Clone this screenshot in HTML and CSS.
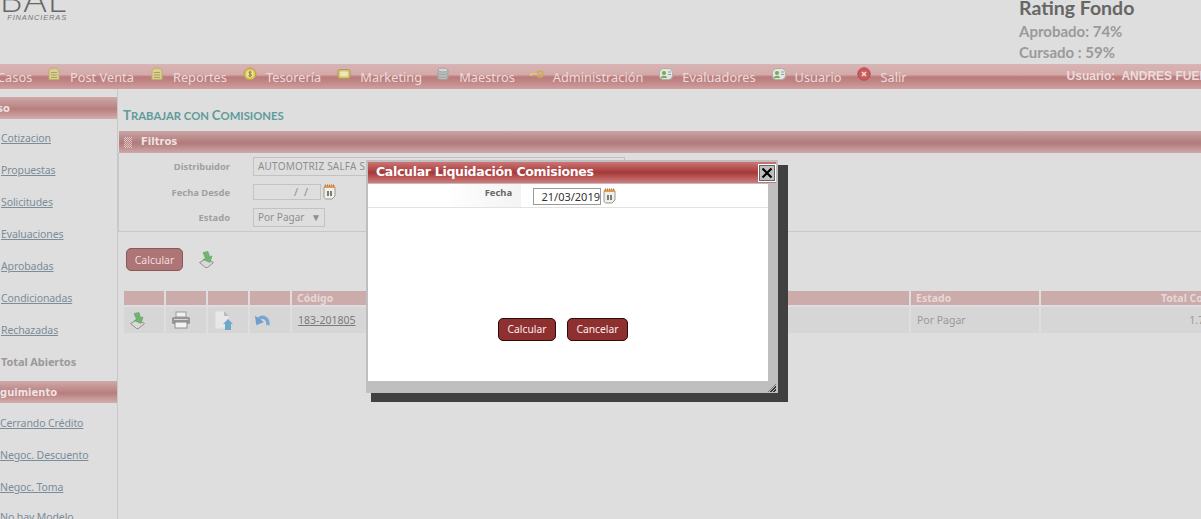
FILE: index.html
```html
<!DOCTYPE html>
<html>
<head>
    <meta charset="utf-8">
    <title>Trabajar con Comisiones</title>
    <link rel="stylesheet" href="styles.css">
</head>
<body>
    <svg width="0" height="0" class="defs">
        <symbol id="i-note" viewBox="0 0 14 14">
            <path d="M2 12.500V4c0-4 10-4 10 0v8.500z" fill="#dccf94" stroke="#bcae68"/>
            <path d="M4 5.500h6M4 8h6M4 10.500h6" stroke="#ac9e5c"/>
        </symbol>
        <symbol id="i-coin" viewBox="0 0 14 14">
            <circle cx="7" cy="7" r="6" fill="#d9c45c" stroke="#b8a23f"/>
            <circle cx="7" cy="7" r="3.800" fill="#eee2a4"/>
            <path d="M8.600 5.400C7.600 4.500 5.600 4.900 6 6.200c.4 1 2.600.6 2.600 2 0 1.200-2.100 1.300-3.100.4M7 3.800v6.400" fill="none" stroke="#8d7a22"/>
        </symbol>
        <symbol id="i-card" viewBox="0 0 16 12">
            <rect x="1" y="1" width="14" height="10" rx="2.500" fill="#d8c97a" stroke="#a4954c"/>
            <rect x="3.500" y="3" width="9" height="5.500" rx="1" fill="#eee6b6"/>
        </symbol>
        <symbol id="i-db" viewBox="0 0 12 14">
            <path d="M1 3v8c0 2 10 2 10 0V3z" fill="#bdbdbd" stroke="#a3a3a3"/>
            <ellipse cx="6" cy="3" rx="5" ry="2" fill="#d4d4d4" stroke="#a3a3a3"/>
            <path d="M1 6c0 2 10 2 10 0M1 8.800c0 2 10 2 10 0" fill="none" stroke="#a3a3a3"/>
        </symbol>
        <symbol id="i-key" viewBox="0 0 14 9">
            <circle cx="10" cy="4.500" r="3" fill="none" stroke="#cdb04e" stroke-width="1.600"/>
            <path d="M7 4.500H1v2" fill="none" stroke="#d9c67c" stroke-width="2"/>
        </symbol>
        <symbol id="i-user" viewBox="0 0 14 12">
            <rect x=".5" y=".5" width="13" height="11" rx="4" fill="#e2e6de" stroke="#a8b0a4"/>
            <circle cx="5" cy="5" r="2" fill="#78aa58"/>
            <path d="M2 10c0-3 6-3 6 0z" fill="#78aa58"/>
            <path d="M9 4h3M9 6.500h3" stroke="#8aa0b4"/>
        </symbol>
        <symbol id="i-exit" viewBox="0 0 14 14">
            <circle cx="7" cy="7" r="6.200" fill="#c95b5b" stroke="#b64a4a"/>
            <path d="M5 5l4 4M9 5l-4 4" stroke="#f0dcdc" stroke-width="1.600"/>
        </symbol>
        <symbol id="i-cal" viewBox="0 0 13 16">
            <path d="M1 3h11v9l-3 3H3c-1 0-2-1-2-2z" fill="#eeeeea" stroke="#9a9a90"/>
            <rect x="1" y="1.500" width="11" height="2.500" fill="#e59a52"/>
            <path d="M2.500 .5v2M4.500 .5v2M6.500 .5v2M8.500 .5v2M10.500 .5v2" stroke="#a87c50"/>
            <path d="M5 7v5M8 7v5" stroke="#333" stroke-width="1.200"/>
        </symbol>
        <symbol id="i-down" viewBox="0 0 15 17">
            <path d="M.5 11.500l7-4 7 4-6 5h-2z" fill="#d9d9d9" stroke="#8f8f8f"/>
            <path d="M4 1.500l5-1 1.500 5 2.500-.5-2 6.500-7-3 2.500-1z" fill="#6fb56f" stroke="#5a9a5a" stroke-width=".5"/>
        </symbol>
        <symbol id="i-print" viewBox="0 0 20 18">
            <rect x="5" y="1" width="10" height="5" fill="#f1f1f1" stroke="#999"/>
            <rect x="1" y="6" width="18" height="7" rx="1.500" fill="#969696"/>
            <rect x="4" y="11" width="12" height="6" fill="#f3f3f3" stroke="#8c8c8c"/>
            <path d="M3 8.500h14" stroke="#d6d6d6"/>
        </symbol>
        <symbol id="i-dochome" viewBox="0 0 20 20">
            <path d="M2 1h9l5 5v13H2z" fill="#e8e8e8" stroke="#d8d8d8"/>
            <path d="M11 1l5 5h-5z" fill="#bcbcbc"/>
            <path d="M15 9l5 5h-2v6h-6v-6h-2z" fill="#6ea8cc"/>
        </symbol>
        <symbol id="i-undo" viewBox="0 0 18 14">
            <path d="M14.500 12.500C16 6 9.500 1.500 5 6" fill="none" stroke="#7aa8d2" stroke-width="3.600"/>
            <path d="M1 2.500l1.500 10 8-3.500z" fill="#6f9ecb"/>
        </symbol>
    </svg>

    <header class="top">
        <div class="logo">
            <div class="logo-name">GLOBAL</div>
            <div class="logo-sub">FINANCIERAS</div>
        </div>
        <div class="rating">
            <h2>Rating Fondo</h2>
            <p>Aprobado: 74%</p>
            <p>Cursado : 59%</p>
        </div>
    </header>

    <nav class="menu">
        <span class="menu-first">Casos</span>
        <a class="menu-item"><svg class="ic"><use href="#i-note"/></svg>Post Venta</a>
        <a class="menu-item"><svg class="ic"><use href="#i-note"/></svg>Reportes</a>
        <a class="menu-item"><svg class="ic"><use href="#i-coin"/></svg>Tesorería</a>
        <a class="menu-item tight2"><svg class="ic"><use href="#i-card"/></svg>Marketing</a>
        <a class="menu-item tight1"><svg class="ic"><use href="#i-db"/></svg>Maestros</a>
        <a class="menu-item"><svg class="ic"><use href="#i-key"/></svg>Administración</a>
        <a class="menu-item"><svg class="ic"><use href="#i-user"/></svg>Evaluadores</a>
        <a class="menu-item"><svg class="ic"><use href="#i-user"/></svg>Usuario</a>
        <a class="menu-item"><svg class="ic"><use href="#i-exit"/></svg>Salir</a>
        <span class="menu-user">Usuario:&nbsp; ANDRES FUENTES</span>
    </nav>

    <div class="layout">
        <aside class="side">
            <div class="side-head"><span class="side-cut1">Caso</span></div>
            <ul class="side-list">
                <li><a>Cotizacion</a></li>
                <li><a>Propuestas</a></li>
                <li><a>Solicitudes</a></li>
                <li><a>Evaluaciones</a></li>
                <li><a>Aprobadas</a></li>
                <li><a>Condicionadas</a></li>
                <li><a>Rechazadas</a></li>
                <li class="total">Total Abiertos</li>
            </ul>
            <div class="side-head"><span class="side-cut2">Seguimiento</span></div>
            <ul class="side-list list-shift">
                <li><a>Cerrando Crédito</a></li>
                <li><a>Negoc. Descuento</a></li>
                <li><a>Negoc. Toma</a></li>
                <li class="last"><a>No hay Modelo</a></li>
            </ul>
        </aside>

        <main class="content">
            <h1 class="title"><span class="cap">T</span>RABAJAR CON <span class="cap">C</span>OMISIONES</h1>
            <div class="bar"><span class="dots"></span>Filtros</div>
            <section class="filters">
                <div class="f-row f-row1">
                    <label>Distribuidor</label>
                    <div class="field field-wide">AUTOMOTRIZ SALFA S.A.</div>
                </div>
                <div class="f-row f-row2">
                    <label>Fecha Desde</label>
                    <div class="field field-date">/ /</div>
                    <svg class="cal"><use href="#i-cal"/></svg>
                </div>
                <div class="f-row f-row3">
                    <label>Estado</label>
                    <div class="field field-sel">Por Pagar <span class="arrow">▼</span></div>
                </div>
            </section>

            <div class="actions">
                <button class="btn-dim">Calcular</button>
                <svg class="act-ic"><use href="#i-down"/></svg>
            </div>

            <div class="grid">
                <div class="th"></div><div class="th"></div><div class="th"></div><div class="th"></div>
                <div class="th">Código</div>
                <div class="th">Estado</div>
                <div class="th th-r">Total Comisión</div>
                <div class="td"><svg class="g-ic"><use href="#i-down"/></svg></div>
                <div class="td"><svg class="g-ic g-print"><use href="#i-print"/></svg></div>
                <div class="td"><svg class="g-ic g-doc"><use href="#i-dochome"/></svg></div>
                <div class="td"><svg class="g-ic g-undo"><use href="#i-undo"/></svg></div>
                <div class="td"><a class="code">183-201805</a></div>
                <div class="td">Por Pagar</div>
                <div class="td td-r">1.748.000</div>
            </div>
        </main>
    </div>

    <div class="modal-shadow"></div>
    <div class="modal">
        <div class="modal-title">
            <span>Calcular Liquidación Comisiones</span>
            <button class="modal-close">
                <svg width="12" height="12" viewBox="0 0 12 12"><path d="M1.500 1.500l9 9M10.500 1.500l-9 9" stroke="#000" stroke-width="2.200"/></svg>
            </button>
        </div>
        <div class="modal-body">
            <div class="m-row">
                <div class="m-label">Fecha</div>
                <div class="m-value">
                    <div class="m-input">21/03/2019</div>
                    <svg class="cal"><use href="#i-cal"/></svg>
                </div>
            </div>
            <div class="m-buttons">
                <button class="btn">Calcular</button>
                <button class="btn">Cancelar</button>
            </div>
        </div>
        <div class="modal-foot"><span class="grip"></span></div>
    </div>
</body>
</html>
```

FILE: styles.css
```css
html, body {
    margin: 0;
    height: 519px;
    overflow: hidden;
}
body {
    width: 1201px;
    background-color: #dedede;
    font-family: "Noto Sans", sans-serif;
    position: relative;
}
.defs {
    position: absolute;
}

/* header */
.top {
    height: 64px;
    display: flex;
    justify-content: space-between;
    overflow: hidden;
}
.logo {
    width: 67px;
    height: 64px;
    overflow: hidden;
}
.logo-name {
    font: 300 36px Lato, sans-serif;
    color: #666;
    letter-spacing: 1px;
    margin-top: -24px;
    height: 37px;
    width: 67px;
    display: flex;
    justify-content: flex-end;
    white-space: nowrap;
}
.logo-sub {
    font: italic 7.500px "Liberation Sans", sans-serif;
    letter-spacing: .85px;
    color: #777;
    text-align: right;
    white-space: nowrap;
}
.rating {
    width: 182px;
    color: #9a9a9a;
    font: bold 15px Lato, sans-serif;
}
.rating h2 {
    font: bold 19.500px Lato, sans-serif;
    color: #666;
    margin: -4px 0 3px 0;
}
.rating p {
    margin: 0 0 3px 0;
}

/* menu */
.menu {
    height: 25px;
    display: flex;
    align-items: center;
    white-space: nowrap;
    color: #ebdcdc;
    font-size: 12.800px;
    background: linear-gradient(#d9b4b4 0, #d3aaaa 42%, #bb7a7a 52%, #c08585 70%, #d09f9f 100%);
}
.menu > * {
    flex-shrink: 0;
}
.menu-first {
    margin-left: -3px;
    width: 50px;
}
.menu-item {
    display: flex;
    align-items: center;
    margin-right: 16px;
}
.tight1 {
    margin-right: 15px;
}
.tight2 {
    margin-right: 14px;
}
.ic {
    width: 14px;
    height: 14px;
    margin: -6px 9px 0 0;
}
.menu-user {
    font: bold 12px "Liberation Sans", sans-serif;
    margin-left: 144px;
    margin-top: -2px;
}

/* layout */
.layout {
    display: flex;
    height: 430px;
}
.side {
    width: 117px;
    flex-shrink: 0;
    border-right: 1px solid #c8c8c8;
    padding-top: 8px;
    overflow: hidden;
}
.side-head {
    height: 22px;
    font: bold 10px/23px "DejaVu Sans", sans-serif;
    color: #efe3e3;
    white-space: nowrap;
    background: linear-gradient(#cfa9a9, #b87e7e 55%, #d3adad);
}
.side-cut1 {
    margin-left: -17px;
}
.side-cut2 {
    margin-left: -14px;
}
.side-list {
    list-style: none;
    margin: 0 0 3px 0;
    padding: 3px 0 0 0;
    font-size: 10.500px;
    letter-spacing: -0.1px;
    color: #7c8c98;
}
.side-list li {
    height: 32px;
    line-height: 32px;
    padding-left: 1px;
    white-space: nowrap;
}
.side-list a {
    text-decoration: underline;
}
.side-list .total {
    font-weight: bold;
    color: #9a9a9a;
    font-size: 11px;
}
.list-shift {
    padding-top: 4px;
}
.list-shift li {
    padding-left: 0;
}
.list-shift .last {
    margin-top: -2px;
}

/* main */
.content {
    flex: 1;
    min-width: 0;
    padding-left: 1px;
}
.title {
    margin: 0 0 0 -1px;
    height: 42px;
    padding-left: 5px;
    font: bold 11.300px/52px Lato, sans-serif;
    color: #5f9b9b;
}
.cap {
    font-size: 13.300px;
}
.bar {
    height: 22px;
    padding-bottom: 2px;
    box-sizing: border-box;
    display: flex;
    align-items: center;
    font: bold 10px "DejaVu Sans", sans-serif;
    color: #efe3e3;
    background: linear-gradient(#c9a3a3, #b07a7a 55%, #cfa8a8);
}
.dots {
    width: 8px;
    height: 11px;
    margin: 2px 9px 0 5px;
    background: repeating-conic-gradient(#dcc4c4 0 25%, transparent 0 50%) 0 0/2px 2px;
}
.filters {
    height: 78px;
    border-left: 1px solid #c8c8c8;
    border-bottom: 1px solid #c8c8c8;
    margin-left: -1px;
    position: relative;
}
.f-row {
    display: flex;
    align-items: center;
    position: absolute;
    left: 0;
}
.f-row1 { top: 4px; }
.f-row2 { top: 31px; }
.f-row3 { top: 55px; }
.f-row label {
    width: 111px;
    margin-right: 23px;
    text-align: right;
    font: bold 9.400px "Noto Sans", sans-serif;
    color: #a0a0a0;
}
.field {
    box-sizing: border-box;
    border: 1px solid #c2c2c2;
    font-size: 10px;
    color: #8e8e8e;
    padding-left: 4px;
    white-space: nowrap;
    overflow: hidden;
}
.field-wide {
    width: 372px;
    height: 19px;
    line-height: 17px;
    letter-spacing: .2px;
}
.field-date {
    width: 68px;
    height: 16px;
    line-height: 14px;
    text-align: right;
    padding-right: 12px;
    word-spacing: 3px;
    font-size: 11px;
}
.field-sel {
    width: 72px;
    height: 19px;
    line-height: 17px;
}
.arrow {
    font-size: 10px;
    margin-left: 4px;
}
.cal {
    width: 13px;
    height: 16px;
    margin-left: 2px;
}
.actions {
    display: flex;
    align-items: center;
    height: 23px;
    padding: 16px 0 0 7px;
}
.btn-dim {
    width: 57px;
    height: 23px;
    padding: 0;
    border: 1px solid #8a5a5a;
    border-radius: 5px;
    background-color: #ad7575;
    color: #efdcdc;
    font: 10.500px "Noto Sans", sans-serif;
}
.act-ic {
    width: 15px;
    height: 17px;
    margin-left: 16px;
    margin-top: -1px;
}

/* table */
.grid {
    display: grid;
    grid-template-columns: 40px 40px 40px 40px 617px 128px 204px;
    gap: 2px;
    margin: 20px 0 0 5px;
    font-size: 10.500px;
    color: #9a9a9a;
}
.th {
    height: 14px;
    line-height: 14px;
    padding-left: 5px;
    box-sizing: border-box;
    background-color: #ccabab;
    color: #e6d8d8;
    font-weight: bold;
}
.td {
    height: 26px;
    line-height: 26px;
    padding-left: 6px;
    box-sizing: border-box;
    background-color: #d6d6d6;
    display: flex;
    align-items: center;
}
.th-r {
    text-align: right;
    padding-right: 7px;
}
.td-r {
    justify-content: flex-end;
    padding-right: 8px;
}
.code {
    color: #7a7a7a;
    text-decoration: underline;
}
.g-ic {
    width: 15px;
    height: 17px;
}
.g-print {
    width: 20px;
    height: 18px;
    margin-left: -1px;
}
.g-doc {
    width: 20px;
    height: 20px;
    margin-left: -1px;
}
.g-undo {
    width: 17px;
    height: 14px;
    margin-left: -2px;
}

/* dialog */
.modal-shadow {
    position: absolute;
    left: 371px;
    top: 165px;
    width: 417px;
    height: 237px;
    background-color: #404040;
}
.modal {
    position: absolute;
    left: 366px;
    top: 160px;
    width: 412px;
    height: 233px;
    box-sizing: border-box;
    padding: 2px 10px 0 2px;
    background-color: #bfbfbf;
    display: flex;
    flex-direction: column;
}
.modal-title {
    height: 21px;
    margin-right: -8px;
    display: flex;
    justify-content: space-between;
    align-items: center;
    padding: 0 0 2px 8px;
    box-sizing: border-box;
    font: bold 12.500px "DejaVu Sans", sans-serif;
    letter-spacing: -0.3px;
    color: #fff;
    background: linear-gradient(#cd7474, #a53a3a 50%, #cf7b7b);
}
.modal-close {
    width: 18px;
    height: 18px;
    padding: 0;
    margin-top: 2px;
    border: 1px solid #fff;
    outline: 1px solid #666;
    outline-offset: -2px;
    background-color: #bfbfbf;
    display: flex;
    align-items: center;
    justify-content: center;
}
.modal-body {
    margin-top: 1px;
    height: 197px;
    background-color: #fff;
}
.m-row {
    height: 23px;
    display: flex;
    border-bottom: 1px solid #e2e2e2;
}
.m-label {
    width: 144px;
    height: 23px;
    padding-right: 9px;
    text-align: right;
    font: bold 9.400px/17px "Noto Sans", sans-serif;
    color: #666;
    background: linear-gradient(90deg, #fff 50%, #f3f3f3);
}
.m-value {
    display: flex;
    align-items: center;
    margin-left: 12px;
    padding-top: 1px;
}
.m-input {
    box-sizing: border-box;
    width: 68px;
    height: 17px;
    line-height: 15px;
    border: 1px solid #9a9a9a;
    font-size: 11px;
    color: #333;
    text-align: right;
}
.m-buttons {
    display: flex;
    gap: 11px;
    padding: 110px 0 0 130px;
}
.btn {
    height: 23px;
    padding: 0 8.500px 1px;
    border: 1px solid #2c0d0d;
    border-radius: 5px;
    background-color: #8e3030;
    color: #fbeeee;
    font: 10.300px "Noto Sans", sans-serif;
}
.modal-foot {
    flex: 1;
    margin-right: -8px;
    display: flex;
    justify-content: flex-end;
    align-items: flex-end;
    padding-bottom: 1px;
}
.grip {
    width: 8px;
    height: 8px;
    background: repeating-linear-gradient(135deg, transparent 0 1px, #333 1px 2px);
    clip-path: polygon(100% 0, 100% 100%, 0 100%);
}
```
